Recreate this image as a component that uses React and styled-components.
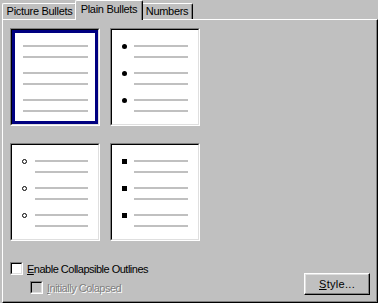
import React from 'react';
import styled, { createGlobalStyle, css } from 'styled-components';

const GlobalStyle = createGlobalStyle`
  html, body {
    margin: 0;
    padding: 0;
    background: #c0c0c0;
  }
  body {
    font-family: 'Liberation Sans', Arial, sans-serif;
    font-size: 11px;
    color: #000;
  }
`;

const Dialog = styled.div`
  width: 378px;
  height: 303px;
  box-sizing: border-box;
  padding-left: 2px;
  display: flex;
  flex-direction: column;
  overflow: hidden;
`;

const TabRow = styled.div`
  display: flex;
  align-items: flex-end;
  height: 19px;
`;

const Tab = styled.div`
  box-sizing: border-box;
  width: ${(p) => p.$width}px;
  height: 16px;
  padding-bottom: 1px;
  display: flex;
  align-items: center;
  justify-content: center;
  white-space: nowrap;
  letter-spacing: -0.3px;
  background: #c0c0c0;
  border-top: 1px solid #fff;
  border-left: 1px solid #fff;
  border-right: 1px solid #000;
  border-radius: 2px 2px 0 0;
  box-shadow: inset -1px 0 #808080;

  ${(p) =>
    p.$active &&
    css`
      position: relative;
      z-index: 1;
      height: 20px;
      margin: 0 -2px -1px -2px;
      padding-bottom: 3px;
    `}
`;

const Panel = styled.div`
  flex: 1;
  box-sizing: border-box;
  border-top: 1px solid #fff;
  border-left: 1px solid #fff;
  border-right: 1px solid #000;
  border-bottom: 1px solid #000;
  box-shadow: inset -1px -1px #808080;
  padding: 8px 7px 0 7px;
  display: flex;
  flex-direction: column;
`;

const PreviewGrid = styled.div`
  display: grid;
  grid-template-columns: 90px 90px;
  grid-template-rows: 98px 98px;
  column-gap: 10px;
  row-gap: 17px;
`;

const Frame = styled.div`
  border: 1px solid;
  border-color: #808080 #fff #fff #808080;
  display: flex;
`;

const FrameInner = styled.div`
  flex: 1;
  border: 1px solid;
  border-color: #000 #dfdfdf #dfdfdf #000;
  display: flex;
`;

const Preview = styled.div`
  flex: 1;
  background: #fff;
  border: 3px solid ${(p) => (p.$selected ? '#000080' : '#fff')};
  padding: 12px 7px 0 ${(p) => p.$indent}px;
  display: flex;
  flex-direction: column;
  gap: 14px;
`;

const Item = styled.div`
  display: flex;
  align-items: flex-start;
  gap: ${(p) => p.$gap}px;
`;

const BulletSlot = styled.div`
  width: 5px;
  height: 2px;
  display: flex;
  align-items: center;
  justify-content: center;
`;

const Dot = styled.span`
  flex: none;
  width: 5px;
  height: 5px;
  border-radius: 50%;
  background: #000;
`;

const Ring = styled.span`
  flex: none;
  box-sizing: border-box;
  width: 5px;
  height: 5px;
  border-radius: 50%;
  border: 1px solid #000;
`;

const Square = styled.span`
  flex: none;
  width: 5px;
  height: 5px;
  background: #000;
`;

const Lines = styled.div`
  flex: 1;
  display: flex;
  flex-direction: column;
  gap: 9px;
`;

const Line = styled.div`
  height: 2px;
  background: #c0c0c0;
`;

const Footer = styled.div`
  margin-top: 21px;
  display: flex;
  justify-content: space-between;
  align-items: flex-end;
`;

const Options = styled.div`
  display: flex;
  flex-direction: column;
  gap: 6px;
`;

const CheckRow = styled.label`
  display: flex;
  align-items: center;
  gap: 4px;
  height: 13px;
  margin-left: ${(p) => (p.$nested ? 20 : 0)}px;
  color: ${(p) => (p.$disabled ? '#808080' : '#000')};
  text-shadow: ${(p) => (p.$disabled ? '1px 1px #fff' : 'none')};
  letter-spacing: -0.5px;
  white-space: nowrap;
`;

const CheckBox = styled.span`
  box-sizing: border-box;
  width: 13px;
  height: 13px;
  border: 1px solid;
  border-color: #808080 #fff #fff #808080;
  display: flex;
`;

const CheckInner = styled.span`
  flex: 1;
  border: 1px solid;
  border-color: #000 #dfdfdf #dfdfdf #000;
  background: ${(p) => (p.$disabled ? '#c0c0c0' : '#fff')};
`;

const Button = styled.button`
  box-sizing: border-box;
  width: 66px;
  height: 22px;
  margin: 0 0 -1px 0;
  padding: 0;
  font: inherit;
  letter-spacing: 0.3px;
  color: #000;
  background: #c0c0c0;
  border: 1px solid;
  border-color: #fff #000 #000 #fff;
  box-shadow: inset -1px -1px #808080, inset 1px 1px #dfdfdf;
  cursor: default;
`;

const tabs = [
  { label: 'Picture Bullets', width: 75 },
  { label: 'Plain Bullets', width: 68, active: true },
  { label: 'Numbers', width: 52 },
];

const bulletLists = ['none', 'dot', 'ring', 'square'];

const renderBullet = (kind) => {
  if (kind === 'dot') return <Dot />;
  if (kind === 'ring') return <Ring />;
  if (kind === 'square') return <Square />;
  return null;
};

const BulletPreview = ({ kind, selected }) => (
  <Frame>
    <FrameInner>
      <Preview $selected={selected} $indent={kind === 'none' ? 8 : 7}>
        {[0, 1, 2].map((i) => (
          <Item key={i} $gap={kind === 'ring' ? 8 : 7}>
            {kind !== 'none' && <BulletSlot>{renderBullet(kind)}</BulletSlot>}
            <Lines>
              <Line />
              <Line />
            </Lines>
          </Item>
        ))}
      </Preview>
    </FrameInner>
  </Frame>
);

const App = () => (
  <>
    <GlobalStyle />
    <Dialog>
      <TabRow>
        {tabs.map((t) => (
          <Tab key={t.label} $width={t.width} $active={t.active}>
            {t.label}
          </Tab>
        ))}
      </TabRow>
      <Panel>
        <PreviewGrid>
          {bulletLists.map((kind, i) => (
            <BulletPreview key={kind} kind={kind} selected={i === 0} />
          ))}
        </PreviewGrid>
        <Footer>
          <Options>
            <CheckRow>
              <CheckBox>
                <CheckInner />
              </CheckBox>
              <span>
                <u>E</u>nable Collapsible Outlines
              </span>
            </CheckRow>
            <CheckRow $nested $disabled>
              <CheckBox>
                <CheckInner $disabled />
              </CheckBox>
              <span>
                <u>I</u>nitially Colapsed
              </span>
            </CheckRow>
          </Options>
          <Button>
            <u>S</u>tyle...
          </Button>
        </Footer>
      </Panel>
    </Dialog>
  </>
);

export default App;
